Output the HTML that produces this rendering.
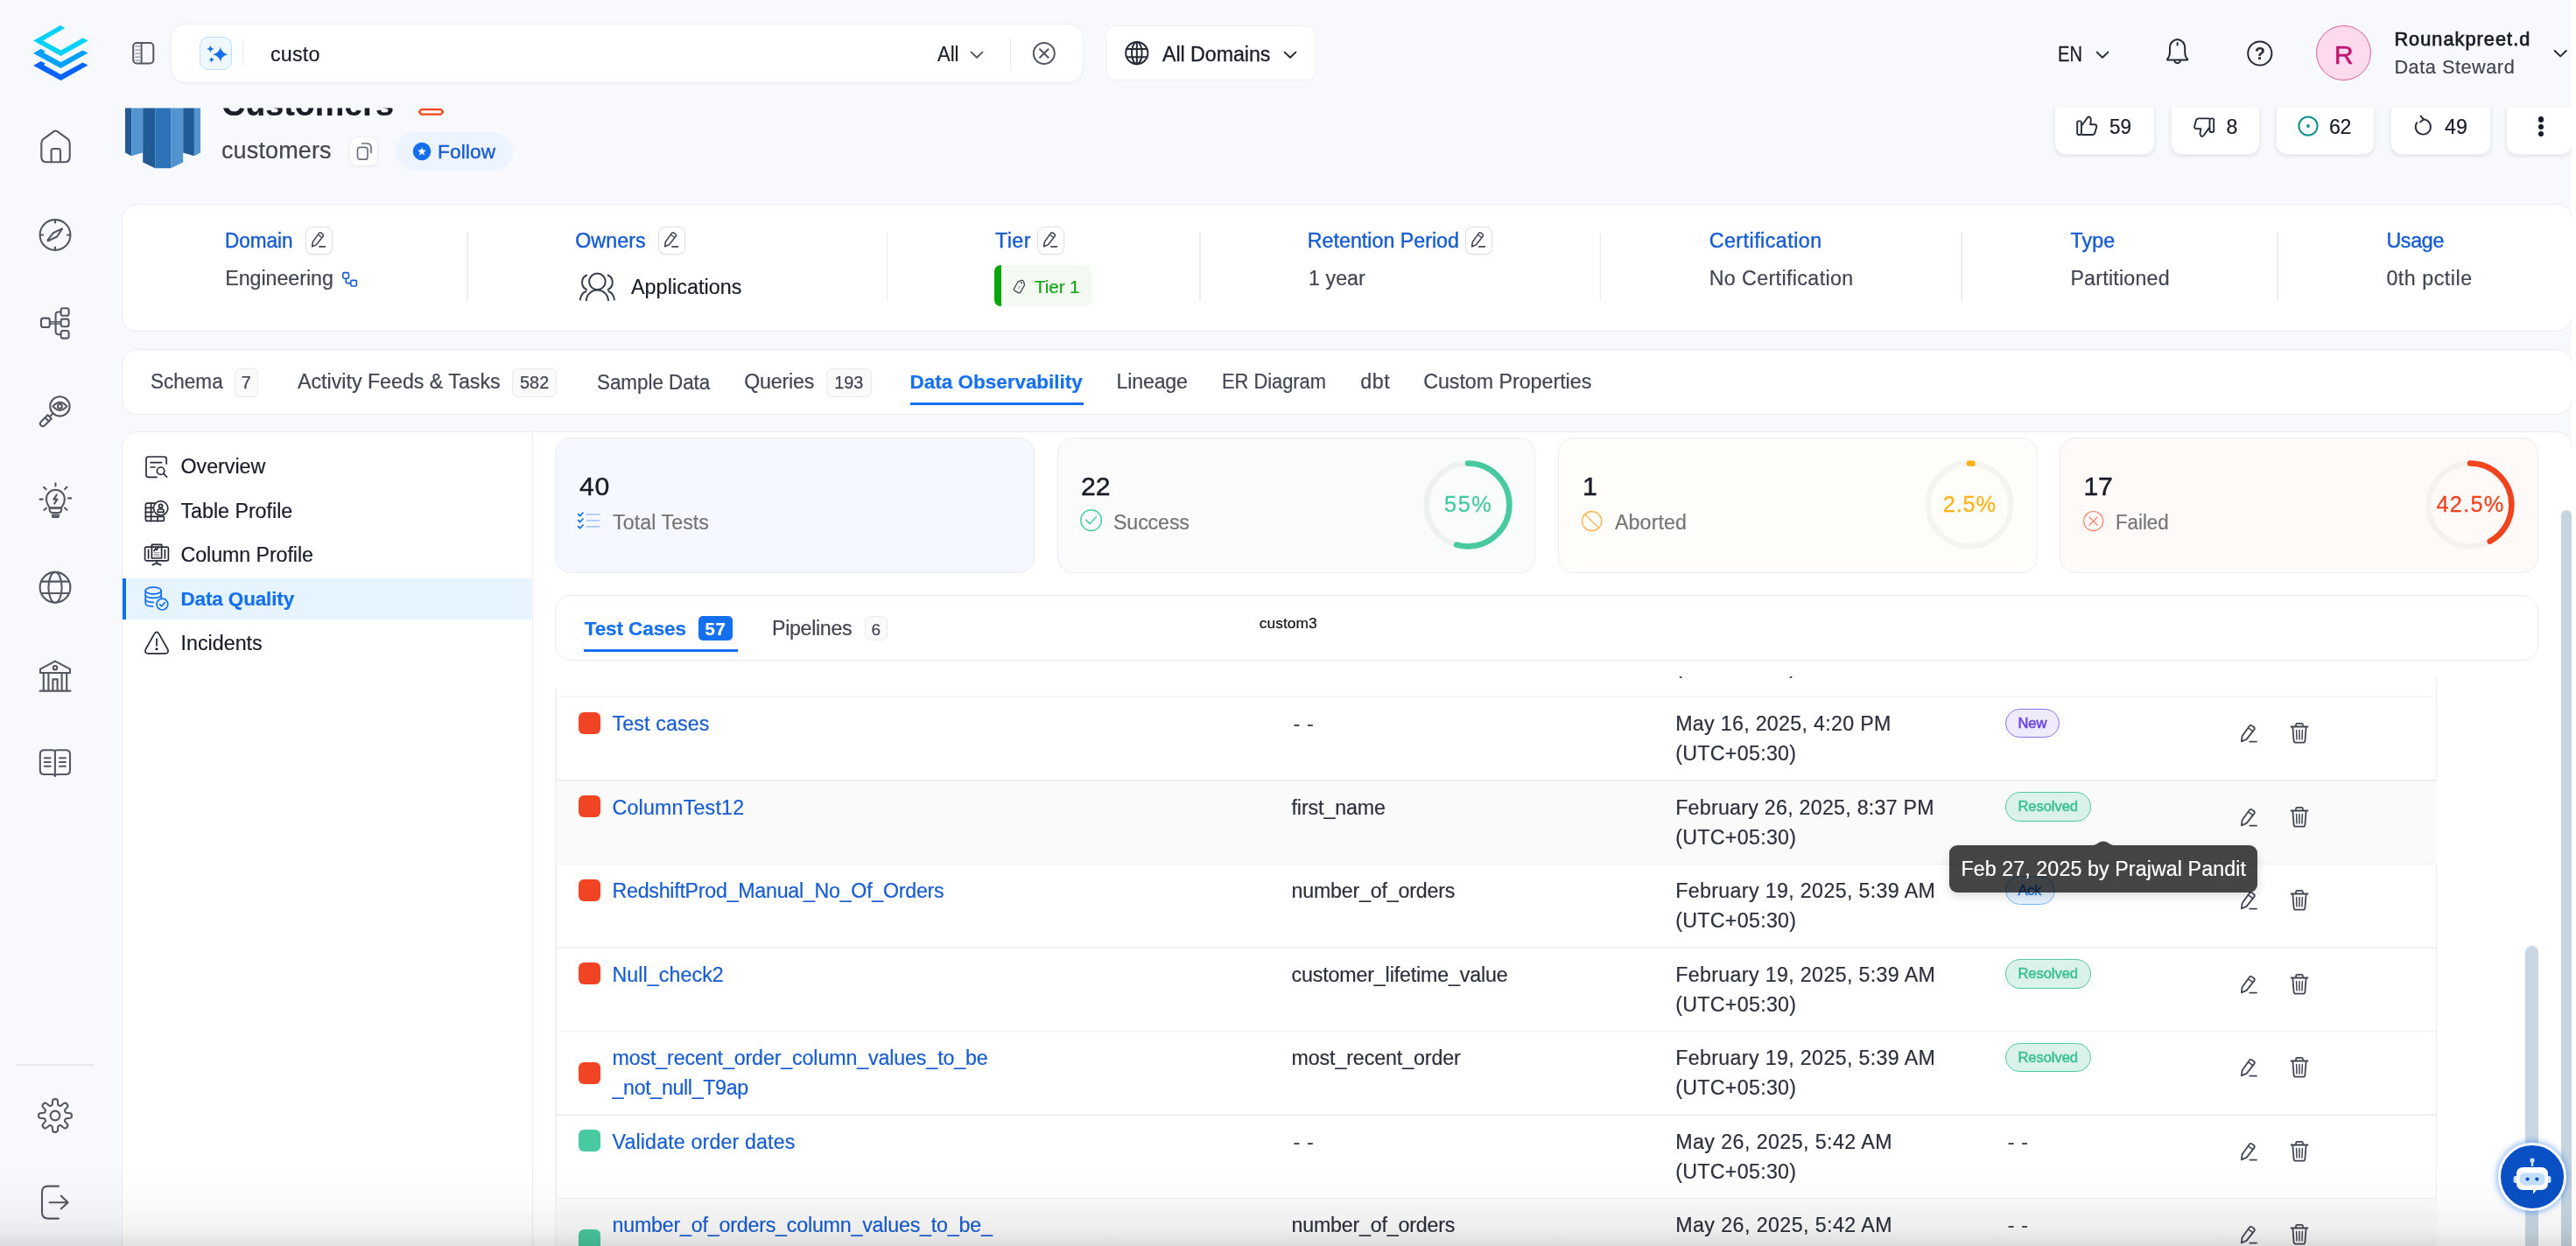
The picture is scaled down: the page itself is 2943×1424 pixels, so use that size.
<!DOCTYPE html>
<html lang="en">
<head>
<meta charset="utf-8">
<title>customers - Data Quality</title>
<style>

*{box-sizing:border-box;margin:0;padding:0}
html,body{width:2943px;height:1424px;overflow:hidden;background:#f8f9fc}
body{font-family:"Liberation Sans",sans-serif;color:#181d27}
#app{position:relative;width:2943px;height:1424px;overflow:hidden;background:#f8f9fc;will-change:transform}
#app div,#app span,#app svg,#app section,#app nav,#app header,#app aside,#app a,#app button{position:absolute}
.t{white-space:nowrap;line-height:1;display:block;-webkit-text-stroke:.2px currentColor}
.card{background:#fff;border:1.5px solid #eaecf5;border-radius:18px}
.ebtn{background:#fff;border:1.5px solid #dcdfe5;border-radius:8px;box-shadow:0 1px 2px rgba(16,24,40,.05)}
.badge{background:#fafafa;border:1.5px solid #e9eaeb;border-radius:6px}
.vdiv{width:1.5px;background:#eaecf5}
.pill{border-radius:20px;border:1.8px solid}
.sq{width:25px;height:25px;border-radius:6px}
.hl{height:1.5px;background:#f0f0f1}
button{font:inherit;border:none;background:none}

</style>
</head>
<body>
<div id="app">
<aside style="left:0;top:0;width:140px;height:1424px"><svg style="left:0.0px;top:0.0px;" width="140" height="110" viewBox="0 0 140 110" fill="none">
<polygon points="69.1,29.1 74.2,32 49.3,46.4 69.5,57.6 94.8,43.2 100.6,46.4 69.5,64.1 38.1,46.4" fill="#00d2fa"/>
<polygon points="46.7,55.8 51.6,58.5 50,60.2 69.5,71 94.4,57.6 100.6,60.5 69.5,77.9 38.1,60.9" fill="#00a0fb"/>
<polygon points="46.7,69.9 51.6,72.6 50,74.2 69.5,85.1 94.4,71.4 100.6,74.6 69.5,92 38.1,75" fill="#0564ff"/>
</svg>
<svg style="left:40.0px;top:145.0px;" width="48" height="48" viewBox="0 0 48 48" fill="none">
<path d="M7.3 18.5 Q7.3 15.5 9.6 13.8 L21.6 5.2 Q23.5 3.9 25.4 5.2 L37.4 13.8 Q39.7 15.5 39.7 18.5 L39.7 34.2 Q39.7 40.2 33.7 40.2 L13.3 40.2 Q7.3 40.2 7.3 34.2 Z" stroke="#535862" stroke-width="2.1" stroke-linecap="round" stroke-linejoin="round" fill="none"/>
<path d="M18.6 40 L18.6 27.4 Q18.6 25 21 25 L26.6 25 Q29 25 29 27.4 L29 40" stroke="#535862" stroke-width="2.1" stroke-linecap="round" stroke-linejoin="round" fill="none"/>
</svg>
<svg style="left:40.0px;top:245.0px;" width="48" height="48" viewBox="0 0 48 48" fill="none">
<circle cx="23" cy="23.5" r="17.4" stroke="#535862" stroke-width="2.1" stroke-linecap="round" stroke-linejoin="round" fill="none"/>
<path d="M23 6.5v3M23 37.5v3M6 23.5h3M37 23.5h3" stroke="#535862" stroke-width="2.1" stroke-linecap="round" stroke-linejoin="round" fill="none"/>
<path d="M30.6 17.2 Q31.6 16.2 30.2 16.6 L20.8 21.3 L14.6 29.2 Q14.2 30.6 15.6 30 L25 25.5 Z" stroke="#535862" stroke-width="2.1" stroke-linecap="round" stroke-linejoin="round" fill="none"/>
</svg>
<svg style="left:40.0px;top:345.0px;" width="48" height="48" viewBox="0 0 48 48" fill="none">
<rect x="7" y="18.6" width="9.8" height="10.4" rx="2.6" stroke="#535862" stroke-width="2.1" stroke-linecap="round" stroke-linejoin="round" fill="none"/>
<rect x="29.6" y="7.2" width="9" height="8.6" rx="2.4" stroke="#535862" stroke-width="2.1" stroke-linecap="round" stroke-linejoin="round" fill="none"/>
<rect x="29.6" y="19.6" width="9" height="8.6" rx="2.4" stroke="#535862" stroke-width="2.1" stroke-linecap="round" stroke-linejoin="round" fill="none"/>
<rect x="29.6" y="33" width="9" height="8.6" rx="2.4" stroke="#535862" stroke-width="2.1" stroke-linecap="round" stroke-linejoin="round" fill="none"/>
<path d="M17 22.8H29.4M17 24.9H29.4" stroke="#535862" stroke-width="1.5"/>
<path d="M29.4 11.5H26.6Q23.6 11.5 23.6 14.5V33.3Q23.6 37.3 26.6 37.3H29.4" stroke="#535862" stroke-width="2.1" stroke-linecap="round" stroke-linejoin="round" fill="none"/>
</svg>
<svg style="left:40.0px;top:447.0px;" width="48" height="48" viewBox="0 0 48 48" fill="none">
<circle cx="28.4" cy="17.4" r="11.2" stroke="#535862" stroke-width="2.1" stroke-linecap="round" stroke-linejoin="round" fill="none"/>
<path d="M20.4 17.4Q28.4 8.4 36.4 17.4Q28.4 26.4 20.4 17.4Z" stroke="#535862" stroke-width="2.1" stroke-linecap="round" stroke-linejoin="round" fill="none" stroke-width="1.8"/>
<circle cx="28.4" cy="17.4" r="2.4" stroke="#535862" stroke-width="2.1" stroke-linecap="round" stroke-linejoin="round" fill="none" stroke-width="1.8"/>
<path d="M20.4 25.6L17.6 28.4" stroke="#535862" stroke-width="2.1" stroke-linecap="round" stroke-linejoin="round" fill="none"/>
<path d="M14.6 27.2L18.8 31.4L11 39.2Q8.9 41.3 6.8 39.2Q4.7 37.1 6.8 35Z" stroke="#535862" stroke-width="2.1" stroke-linecap="round" stroke-linejoin="round" fill="none"/>
<path d="M11.6 30.2L15.8 34.4" stroke="#535862" stroke-width="2.1" stroke-linecap="round" stroke-linejoin="round" fill="none"/>
</svg>
<svg style="left:40.0px;top:547.0px;" width="48" height="48" viewBox="0 0 48 48" fill="none">
<path d="M17.4 33.4Q13 29.2 13 23.2A10.4 10.4 0 0 1 33.8 23.2Q33.8 29.2 29.4 33.4Z" stroke="#535862" stroke-width="2.1" stroke-linecap="round" stroke-linejoin="round" fill="none"/>
<path d="M16.6 33.6H30.2V35.2Q30.2 39 26.4 39H20.4Q16.6 39 16.6 35.2Z" stroke="#535862" stroke-width="2.1" stroke-linecap="round" stroke-linejoin="round" fill="none"/>
<path d="M20 41.6H27V42.4Q27 44 25.4 44H21.6Q20 44 20 42.4Z" stroke="#535862" stroke-width="2.1" stroke-linecap="round" stroke-linejoin="round" fill="none" stroke-width="1.6"/>
<path d="M24.8 18.4L21.4 23.6H25.4L22.2 28.6" stroke="#535862" stroke-width="2.1" stroke-linecap="round" stroke-linejoin="round" fill="none" stroke-width="1.8"/>
<path d="M23.4 5.2V8.4M10 9.8L12.6 12.2M36.6 9.6L34 12M5.6 23.6H8.8M38 22.4H41.2M10.4 36L13 33.6M36.6 35.8L34 33.4" stroke="#535862" stroke-width="2.1" stroke-linecap="round" stroke-linejoin="round" fill="none"/>
</svg>
<svg style="left:40.0px;top:648.0px;" width="48" height="48" viewBox="0 0 48 48" fill="none">
<circle cx="23" cy="23.3" r="17.4" stroke="#535862" stroke-width="2.1" stroke-linecap="round" stroke-linejoin="round" fill="none"/>
<ellipse cx="23" cy="23.3" rx="7.6" ry="17.4" stroke="#535862" stroke-width="2.1" stroke-linecap="round" stroke-linejoin="round" fill="none"/>
<path d="M7.4 16.6H38.6M7.4 30H38.6" stroke="#535862" stroke-width="2.1" stroke-linecap="round" stroke-linejoin="round" fill="none"/>
</svg>
<svg style="left:40.0px;top:750.0px;" width="48" height="48" viewBox="0 0 48 48" fill="none">
<path d="M6 14.6L23 5.6L40 14.6V19H6Z" stroke="#535862" stroke-width="2.1" stroke-linecap="round" stroke-linejoin="round" fill="none"/>
<circle cx="23" cy="13.2" r="2.2" stroke="#535862" stroke-width="2.1" stroke-linecap="round" stroke-linejoin="round" fill="none" stroke-width="1.8"/>
<path d="M9.8 19.4V38.6M15.4 19.4V38.6M30.6 19.4V38.6M36.2 19.4V38.6" stroke="#535862" stroke-width="2.1" stroke-linecap="round" stroke-linejoin="round" fill="none"/>
<path d="M20.4 38.6V26.4H25.6V38.6" stroke="#535862" stroke-width="2.1" stroke-linecap="round" stroke-linejoin="round" fill="none"/>
<path d="M5.6 39.6H40.4" stroke="#535862" stroke-width="2.1" stroke-linecap="round" stroke-linejoin="round" fill="none" stroke-width="2.4"/>
</svg>
<svg style="left:40.0px;top:850.0px;" width="48" height="48" viewBox="0 0 48 48" fill="none">
<path d="M22.8 8.6Q22.8 7.2 19.6 7.2H10.6Q5.8 7.2 5.8 12V30.2Q5.8 35 10.6 35H19.6Q22.8 35 22.8 36.4" stroke="#535862" stroke-width="2.1" stroke-linecap="round" stroke-linejoin="round" fill="none"/>
<path d="M22.8 8.6Q22.8 7.2 26 7.2H35.2Q40 7.2 40 12V30.2Q40 35 35.2 35H26Q22.8 35 22.8 36.4" stroke="#535862" stroke-width="2.1" stroke-linecap="round" stroke-linejoin="round" fill="none"/>
<path d="M22.9 8.6V37" stroke="#535862" stroke-width="2.1" stroke-linecap="round" stroke-linejoin="round" fill="none" stroke-width="2.4"/>
<path d="M10.8 16.2H17.6M10.8 21H17.6M10.8 25.8H17.6M28 16.2H34.8M28 21H34.8M28 25.8H34.8" stroke="#535862" stroke-width="2.1" stroke-linecap="round" stroke-linejoin="round" fill="none" stroke-width="1.8"/>
</svg>
<div style="left:19.0px;top:1216.0px;width:88.0px;height:1.5px;background:#e6e8ee"></div>
<svg style="left:39.0px;top:1250.6px;" width="48" height="48" viewBox="0 0 48 48" fill="none">
<path d="M24.00 5.10L24.74 5.13L25.47 5.26L26.18 5.62L26.75 6.62L27.04 8.70L27.17 10.78L27.45 11.78L27.83 12.20L28.26 12.44L28.71 12.64L29.16 12.81L29.63 12.95L30.20 12.93L31.11 12.40L32.67 11.03L34.35 9.76L35.46 9.47L36.21 9.71L36.82 10.14L37.36 10.64L37.86 11.18L38.29 11.79L38.53 12.54L38.24 13.65L36.97 15.33L35.60 16.89L35.07 17.80L35.05 18.37L35.19 18.84L35.36 19.29L35.56 19.74L35.80 20.17L36.22 20.55L37.22 20.83L39.30 20.96L41.38 21.25L42.38 21.82L42.74 22.53L42.87 23.26L42.90 24.00L42.87 24.74L42.74 25.47L42.38 26.18L41.38 26.75L39.30 27.04L37.22 27.17L36.22 27.45L35.80 27.83L35.56 28.26L35.36 28.71L35.19 29.16L35.05 29.63L35.07 30.20L35.60 31.11L36.97 32.67L38.24 34.35L38.53 35.46L38.29 36.21L37.86 36.82L37.36 37.36L36.82 37.86L36.21 38.29L35.46 38.53L34.35 38.24L32.67 36.97L31.11 35.60L30.20 35.07L29.63 35.05L29.16 35.19L28.71 35.36L28.26 35.56L27.83 35.80L27.45 36.22L27.17 37.22L27.04 39.30L26.75 41.38L26.18 42.38L25.47 42.74L24.74 42.87L24.00 42.90L23.26 42.87L22.53 42.74L21.82 42.38L21.25 41.38L20.96 39.30L20.83 37.22L20.55 36.22L20.17 35.80L19.74 35.56L19.29 35.36L18.84 35.19L18.37 35.05L17.80 35.07L16.89 35.60L15.33 36.97L13.65 38.24L12.54 38.53L11.79 38.29L11.18 37.86L10.64 37.36L10.14 36.82L9.71 36.21L9.47 35.46L9.76 34.35L11.03 32.67L12.40 31.11L12.93 30.20L12.95 29.63L12.81 29.16L12.64 28.71L12.44 28.26L12.20 27.83L11.78 27.45L10.78 27.17L8.70 27.04L6.62 26.75L5.62 26.18L5.26 25.47L5.13 24.74L5.10 24.00L5.13 23.26L5.26 22.53L5.62 21.82L6.62 21.25L8.70 20.96L10.78 20.83L11.78 20.55L12.20 20.17L12.44 19.74L12.64 19.29L12.81 18.84L12.95 18.37L12.93 17.80L12.40 16.89L11.03 15.33L9.76 13.65L9.47 12.54L9.71 11.79L10.14 11.18L10.64 10.64L11.18 10.14L11.79 9.71L12.54 9.47L13.65 9.76L15.33 11.03L16.89 12.40L17.80 12.93L18.37 12.95L18.84 12.81L19.29 12.64L19.74 12.44L20.17 12.20L20.55 11.78L20.83 10.78L20.96 8.70L21.25 6.62L21.82 5.62L22.53 5.26L23.26 5.13L24.00 5.10Z" stroke="#535862" stroke-width="2.1" stroke-linecap="round" stroke-linejoin="round" fill="none"/>
<circle cx="24" cy="24" r="5.4" stroke="#535862" stroke-width="2.1" stroke-linecap="round" stroke-linejoin="round" fill="none"/>
</svg>
<svg style="left:40.0px;top:1350.0px;" width="48" height="48" viewBox="0 0 48 48" fill="none">
<path d="M27 5.6H15Q8 5.6 8 12.6V35.6Q8 42.6 15 42.6H27" stroke="#535862" stroke-width="2.1" stroke-linecap="round" stroke-linejoin="round" fill="none"/>
<path d="M16.6 24.2H37.4M29.8 16.8L37.6 24.2L29.8 31.6" stroke="#535862" stroke-width="2.1" stroke-linecap="round" stroke-linejoin="round" fill="none"/>
</svg></aside>
<header style="left:0;top:0;width:2943px;height:123px"><svg style="left:148.0px;top:44.0px;" width="32" height="32" viewBox="0 0 32 32" fill="none">
<rect x="4.2" y="5" width="23.1" height="23.4" rx="4" stroke="#535862" stroke-width="2" stroke-linecap="round" stroke-linejoin="round" fill="none" stroke-width="2.2"/>
<path d="M13.6 5V28.4" stroke="#535862" stroke-width="2" stroke-linecap="round" stroke-linejoin="round" fill="none" stroke-width="2.2"/>
<path d="M6.4 8.9H12M6.4 13.1H12M6.4 17.2H12M6.4 21.2H12M6.4 25.2H12" stroke="#8a8f9a" stroke-width="1.3"/>
</svg>
<div style="left:195.0px;top:27.0px;width:1043.4px;height:67.5px;background:#fff;border:1.5px solid #eef0f6;border-radius:18px;box-shadow:0 1px 3px rgba(16,24,40,.04)"></div>
<div style="left:228.0px;top:42.0px;width:37.0px;height:38.0px;background:#eff8ff;border:1.5px solid #b9e1fd;border-radius:10px"></div>
<svg style="left:228.0px;top:42.0px;" width="37" height="38" viewBox="0 0 37 38" fill="none">
<path d="M23.8 11.6Q24.9 18.6 32.4 20.2Q24.9 21.8 23.8 28.8Q22.7 21.8 15.2 20.2Q22.7 18.6 23.8 11.6Z" fill="#1570ef"/>
<path d="M12.4 9.6Q12.9 13.4 16.6 13.9Q12.9 14.4 12.4 18.2Q11.9 14.4 8.2 13.9Q11.9 13.4 12.4 9.6Z" fill="#1570ef"/>
<path d="M13.7 23.2Q14.1 25.9 16.9 26.3Q14.1 26.7 13.7 29.4Q13.3 26.7 10.5 26.3Q13.3 25.9 13.7 23.2Z" fill="#1570ef"/>
</svg>
<div style="left:277.0px;top:44.0px;width:1.2px;height:32.0px;background:#e6e8ef"></div>
<span class="t" style="left:309.0px;top:51px;font-size:23.21px;letter-spacing:0.206px;color:#181d27;">custo</span>
<span class="t" style="left:1071.0px;top:51px;font-size:23.21px;color:#181d27;transform:scaleX(0.9498);transform-origin:0 50%;">All</span>
<svg style="left:1103.6px;top:50.8px;" width="24" height="24" viewBox="0 0 24 24" fill="none"><path d="M5.6 8.6L12 14.8L18.4 8.6" stroke="#535862" stroke-width="2" stroke-linecap="round" stroke-linejoin="round" fill="none"/></svg>
<div style="left:1154.0px;top:44.0px;width:1.2px;height:32.0px;background:#e6e8ef"></div>
<svg style="left:1176.0px;top:44.0px;" width="34" height="34" viewBox="0 0 34 34" fill="none">
<circle cx="16.8" cy="17" r="12" stroke="#535862" stroke-width="2" stroke-linecap="round" stroke-linejoin="round" fill="none"/>
<path d="M12 12.2L21.6 21.8M21.6 12.2L12 21.8" stroke="#535862" stroke-width="2" stroke-linecap="round" stroke-linejoin="round" fill="none"/>
</svg>
<div style="left:1262.8px;top:29.2px;width:241.2px;height:63.0px;background:#fff;border:1.5px solid #eef0f6;border-radius:12px"></div>
<svg style="left:1282.0px;top:44.0px;" width="34" height="34" viewBox="0 0 34 34" fill="none">
<circle cx="16.8" cy="16.6" r="12.6" stroke="#252b37" stroke-width="2" stroke-linecap="round" stroke-linejoin="round" fill="none" stroke-width="1.8"/>
<ellipse cx="16.8" cy="16.6" rx="5.8" ry="12.6" stroke="#252b37" stroke-width="2" stroke-linecap="round" stroke-linejoin="round" fill="none" stroke-width="1.7"/>
<path d="M16.8 4V29.2M5.2 12H28.4M5.2 21.2H28.4" stroke="#252b37" stroke-width="2" stroke-linecap="round" stroke-linejoin="round" fill="none" stroke-width="1.6"/>
</svg>
<span class="t" style="left:1328.0px;top:51px;font-size:23.21px;letter-spacing:-0.033px;color:#181d27;-webkit-text-stroke:0.3px #181d27;">All Domains</span>
<svg style="left:1462.0px;top:50.8px;" width="24" height="24" viewBox="0 0 24 24" fill="none"><path d="M5.6 8.6L12 14.8L18.4 8.6" stroke="#252b37" stroke-width="2" stroke-linecap="round" stroke-linejoin="round" fill="none"/></svg>
<span class="t" style="left:2350.6px;top:51px;font-size:23.21px;color:#181d27;-webkit-text-stroke:0.3px #181d27;transform:scaleX(0.8653);transform-origin:0 50%;">EN</span>
<svg style="left:2389.5px;top:50.8px;" width="24" height="24" viewBox="0 0 24 24" fill="none"><path d="M5.6 8.6L12 14.8L18.4 8.6" stroke="#252b37" stroke-width="2" stroke-linecap="round" stroke-linejoin="round" fill="none"/></svg>
<svg style="left:2470.0px;top:42.0px;" width="36" height="36" viewBox="0 0 36 36" fill="none">
<path d="M6.2 25.4Q9 22.6 9 17.2V13Q9 4.6 17.6 3Q26.2 4.6 26.2 13V17.2Q26.2 22.6 29 25.4Q29.6 26.6 28.4 26.6H6.8Q5.6 26.6 6.2 25.4Z" stroke="#252b37" stroke-width="2" stroke-linecap="round" stroke-linejoin="round" fill="none"/>
<path d="M14.2 27Q14.6 30.2 17.6 30.2Q20.6 30.2 21 27" stroke="#252b37" stroke-width="2" stroke-linecap="round" stroke-linejoin="round" fill="none"/>
<path d="M17.6 7V9.6" stroke="#252b37" stroke-width="2" stroke-linecap="round" stroke-linejoin="round" fill="none"/>
</svg>
<svg style="left:2564.0px;top:43.0px;" width="36" height="36" viewBox="0 0 36 36" fill="none">
<circle cx="17.8" cy="18" r="13.6" stroke="#252b37" stroke-width="2" stroke-linecap="round" stroke-linejoin="round" fill="none" stroke-width="2.2"/>
</svg>
<span class="t" style="left:2576.1px;top:52px;font-size:19.38px;font-weight:700;color:#252b37;">?</span>
<div style="left:2646.1px;top:29.1px;width:62.9px;height:62.9px;background:#fddaed;border:1.6px solid #dc5c97;border-radius:50%"></div>
<span class="t" style="left:2666.8px;top:47px;font-size:30.40px;color:#c11574;-webkit-text-stroke:0.5px #c11574;">R</span>
<span class="t" style="left:2735.4px;top:34px;font-size:21.73px;letter-spacing:1.036px;color:#181d27;-webkit-text-stroke:0.75px #181d27;">Rounakpreet.d</span>
<span class="t" style="left:2735.4px;top:66px;font-size:21.73px;letter-spacing:0.521px;color:#414651;">Data Steward</span>
<svg style="left:2913.0px;top:49.0px;" width="24" height="24" viewBox="0 0 24 24" fill="none"><path d="M5.6 9L12.2 15.4L18.8 9" stroke="#252b37" stroke-width="2" stroke-linecap="round" stroke-linejoin="round" fill="none"/></svg></header>
<main style="left:0;top:0;width:2943px;height:1424px;clip-path:inset(123.5px 0 0 0)">
<svg style="left:142.8px;top:100.0px;" width="86" height="93" viewBox="0 0 86 93" fill="none">
<polygon points="0,0 7.2,0 7.2,78.2 0,74.4" fill="#205b98"/>
<polygon points="7.2,0 20.2,0 20.2,74.6 7.2,78.2" fill="#5294cf"/>
<polygon points="20.2,0 34.2,0 34.2,92.2 20.2,85.4" fill="#205b98"/>
<polygon points="34.2,0 52.2,0 52.2,92.2 34.2,92.2" fill="#2e73b8"/>
<polygon points="52.2,0 66.2,0 66.2,85.4 52.2,92.2" fill="#5294cf"/>
<polygon points="66.2,0 78.9,0 78.9,78.2 66.2,74.6" fill="#205b98"/>
<polygon points="78.9,0 86,0 86,74.4 78.9,78.2" fill="#5294cf"/>
</svg>
<span class="t" style="left:253.0px;top:100px;font-size:38.45px;font-weight:700;color:#181d27;transform:scaleX(0.9807);transform-origin:0 50%;">Customers</span>
<svg style="left:470.0px;top:118.0px;" width="44" height="20" viewBox="0 0 44 20" fill="none"><polygon points="9,9.9 11.1,7.2 34,7.2 36.1,9.9 34,12.6 11.1,12.6" stroke="#f04419" stroke-width="2.3" stroke-linejoin="round" fill="none"/></svg>
<span class="t" style="left:253.0px;top:159px;font-size:27.00px;letter-spacing:0.121px;color:#414651;">customers</span>
<div class="ebtn" style="left:398.5px;top:156.3px;width:33.8px;height:34.1px;border-color:#eceef3;border-radius:9px"></div>
<svg style="left:403.0px;top:161.0px;" width="25" height="25" viewBox="0 0 25 25" fill="none">
<rect x="5.5" y="7.4" width="11.5" height="13.8" rx="2.8" stroke="#6b717e" stroke-width="1.7" fill="#fff"/>
<path d="M10.6 3H16Q21 3 21 8V13.4" stroke="#6b717e" stroke-width="1.7" stroke-linecap="round" fill="none"/>
</svg>
<div style="left:451.5px;top:151.0px;width:134.0px;height:44.0px;background:#eef4fe;border-radius:22px"></div>
<svg style="left:470.0px;top:161.0px;" width="24" height="24" viewBox="0 0 24 24" fill="none">
<circle cx="12" cy="12" r="10.3" fill="#1570ef"/>
<path d="M12 7.2L13.3 10.5L16.8 10.7L14.1 12.9L15 16.4L12 14.5L9 16.4L9.9 12.9L7.2 10.7L10.7 10.5Z" fill="#fff"/>
</svg>
<span class="t" style="left:500.0px;top:163px;font-size:22.58px;letter-spacing:0.152px;color:#175cd3;-webkit-text-stroke:0.4px #175cd3;">Follow</span>
<div style="left:2346.9px;top:100.0px;width:115.3px;height:76.6px;background:#fff;border:1.5px solid #eef0f5;border-radius:13px;box-shadow:0 2px 4px rgba(16,24,40,.09)"></div>
<div style="left:2480.4px;top:100.0px;width:101.2px;height:76.6px;background:#fff;border:1.5px solid #eef0f5;border-radius:13px;box-shadow:0 2px 4px rgba(16,24,40,.09)"></div>
<div style="left:2600.0px;top:100.0px;width:113.0px;height:76.6px;background:#fff;border:1.5px solid #eef0f5;border-radius:13px;box-shadow:0 2px 4px rgba(16,24,40,.09)"></div>
<div style="left:2731.2px;top:100.0px;width:115.0px;height:76.6px;background:#fff;border:1.5px solid #eef0f5;border-radius:13px;box-shadow:0 2px 4px rgba(16,24,40,.09)"></div>
<div style="left:2863.2px;top:100.0px;width:75.4px;height:76.6px;background:#fff;border:1.5px solid #eef0f5;border-radius:13px;box-shadow:0 2px 4px rgba(16,24,40,.09)"></div>
<svg style="left:2370.0px;top:130.0px;" width="30" height="30" viewBox="0 0 30 30" fill="none"><rect x="3.2" y="8.4" width="4.7" height="15.6" rx="1.7" stroke="#252b37" stroke-width="1.9" stroke-linecap="round" stroke-linejoin="round" fill="none"/>
<path d="M8.9 12.8L14.9 4.4Q16.4 2.6 18 4.4Q19.5 6.2 18.6 9.2L18.1 12.3H22.8Q25.8 12.5 25.2 15.2L23.4 21.8Q22.8 24 20.4 24H8.9" stroke="#252b37" stroke-width="1.9" stroke-linecap="round" stroke-linejoin="round" fill="none"/></svg>
<span class="t" style="left:2410.0px;top:134px;font-size:23.21px;color:#181d27;transform:scaleX(0.9684);transform-origin:0 50%;">59</span>
<svg style="left:2503.0px;top:130.0px;" width="30" height="30" viewBox="0 0 30 30" fill="none"><g transform="rotate(180 14.7 14.7)"><rect x="3.2" y="8.4" width="4.7" height="15.6" rx="1.7" stroke="#252b37" stroke-width="1.9" stroke-linecap="round" stroke-linejoin="round" fill="none"/>
<path d="M8.9 12.8L14.9 4.4Q16.4 2.6 18 4.4Q19.5 6.2 18.6 9.2L18.1 12.3H22.8Q25.8 12.5 25.2 15.2L23.4 21.8Q22.8 24 20.4 24H8.9" stroke="#252b37" stroke-width="1.9" stroke-linecap="round" stroke-linejoin="round" fill="none"/></g></svg>
<span class="t" style="left:2543.5px;top:134px;font-size:23.21px;color:#181d27;">8</span>
<svg style="left:2622.0px;top:129.0px;" width="30" height="30" viewBox="0 0 30 30" fill="none">
<circle cx="15" cy="15" r="10.6" stroke="#0e9384" stroke-width="2" fill="none"/><circle cx="15" cy="15" r="1.9" fill="#0e9384"/>
</svg>
<span class="t" style="left:2661.0px;top:134px;font-size:23.21px;letter-spacing:-0.417px;color:#181d27;">62</span>
<svg style="left:2753.0px;top:129.0px;" width="30" height="30" viewBox="0 0 30 30" fill="none">
<path d="M15.6 7.4A8.6 8.6 0 1 1 8.2 11.2" stroke="#252b37" stroke-width="1.9" stroke-linecap="round" stroke-linejoin="round" fill="none"/>
<path d="M12.6 3.6L16 7.4L12 10.4" stroke="#252b37" stroke-width="1.9" stroke-linecap="round" stroke-linejoin="round" fill="none"/>
</svg>
<span class="t" style="left:2793.0px;top:134px;font-size:23.21px;letter-spacing:-0.017px;color:#181d27;">49</span>
<div style="left:2900.1px;top:133.4px;width:6.4px;height:6.4px;background:#181d27;border-radius:50%"></div>
<div style="left:2900.1px;top:141.5px;width:6.4px;height:6.4px;background:#181d27;border-radius:50%"></div>
<div style="left:2900.1px;top:149.7px;width:6.4px;height:6.4px;background:#181d27;border-radius:50%"></div>
<div class="card" style="left:139.0px;top:233.3px;width:2800.0px;height:146.2px;"></div>
<span class="t" style="left:257.2px;top:264px;font-size:23.21px;color:#175cd3;-webkit-text-stroke:0.42px #175cd3;transform:scaleX(0.9703);transform-origin:0 50%;">Domain</span>
<div class="ebtn" style="left:348.6px;top:259.3px;width:31.0px;height:31.4px;"></div><svg style="left:348.6px;top:259.3px;" width="31" height="31" viewBox="0 0 31 31" fill="none"><path d="M7.6 22.7L8.3 17.5L15.4 7.6Q16.5 6.2 17.9 7.2L19.8 8.6Q21.1 9.7 20.1 11.1L12.6 20.6Z" stroke="#414651" stroke-width="1.55" stroke-linejoin="round" fill="none"/><path d="M14.3 9.3L18.8 12.6" stroke="#414651" stroke-width="1.3"/><path d="M15.8 22.9H22.4" stroke="#414651" stroke-width="1.6" stroke-linecap="round"/></svg>
<span class="t" style="left:257.2px;top:307px;font-size:23.21px;letter-spacing:-0.018px;color:#414651;">Engineering</span>
<svg style="left:389.0px;top:309.0px;" width="22" height="22" viewBox="0 0 22 22" fill="none">
<rect x="2.8" y="2.6" width="6.6" height="6.6" rx="1.6" stroke="#175cd3" stroke-width="1.6"/>
<rect x="11.8" y="11.4" width="6.6" height="6.6" rx="1.6" stroke="#175cd3" stroke-width="1.6"/>
<path d="M6.2 9.4V12.4Q6.2 14.6 8.4 14.6H11.6" stroke="#175cd3" stroke-width="1.6" fill="none"/>
</svg>
<div class="vdiv" style="left:533.0px;top:266.0px;width:1.5px;height:77.5px;"></div>
<div class="vdiv" style="left:1012.9px;top:266.0px;width:1.5px;height:77.5px;"></div>
<div class="vdiv" style="left:1370.0px;top:266.0px;width:1.5px;height:77.5px;"></div>
<div class="vdiv" style="left:1827.7px;top:266.0px;width:1.5px;height:77.5px;"></div>
<div class="vdiv" style="left:2240.3px;top:266.0px;width:1.5px;height:77.5px;"></div>
<div class="vdiv" style="left:2601.4px;top:266.0px;width:1.5px;height:77.5px;"></div>
<span class="t" style="left:657.2px;top:264px;font-size:23.21px;letter-spacing:0.087px;color:#175cd3;-webkit-text-stroke:0.42px #175cd3;">Owners</span>
<div class="ebtn" style="left:752.0px;top:259.3px;width:31.0px;height:31.4px;"></div><svg style="left:752.0px;top:259.3px;" width="31" height="31" viewBox="0 0 31 31" fill="none"><path d="M7.6 22.7L8.3 17.5L15.4 7.6Q16.5 6.2 17.9 7.2L19.8 8.6Q21.1 9.7 20.1 11.1L12.6 20.6Z" stroke="#414651" stroke-width="1.55" stroke-linejoin="round" fill="none"/><path d="M14.3 9.3L18.8 12.6" stroke="#414651" stroke-width="1.3"/><path d="M15.8 22.9H22.4" stroke="#414651" stroke-width="1.6" stroke-linecap="round"/></svg>
<svg style="left:660.0px;top:309.0px;" width="46" height="40" viewBox="0 0 46 40" fill="none">
<circle cx="22.4" cy="12.8" r="9.3" stroke="#363c49" stroke-width="2" stroke-linecap="butt" stroke-linejoin="round" fill="none"/>
<path d="M9.8 35A12.6 12.6 0 0 1 35 35" stroke="#363c49" stroke-width="2" stroke-linecap="butt" stroke-linejoin="round" fill="none"/>
<path d="M10.8 5.3A9 9 0 0 0 10.8 22.1M34 5.3A9 9 0 0 1 34 22.1" stroke="#363c49" stroke-width="2" stroke-linecap="butt" stroke-linejoin="round" fill="none"/>
<path d="M10.3 23.3A12.6 12.6 0 0 0 2.8 34.2M34.5 23.3A12.6 12.6 0 0 1 42 34.2" stroke="#363c49" stroke-width="2" stroke-linecap="butt" stroke-linejoin="round" fill="none"/>
</svg>
<span class="t" style="left:721.0px;top:317px;font-size:23.21px;letter-spacing:0.114px;color:#181d27;">Applications</span>
<span class="t" style="left:1137.0px;top:264px;font-size:23.21px;letter-spacing:0.430px;color:#175cd3;-webkit-text-stroke:0.42px #175cd3;">Tier</span>
<div class="ebtn" style="left:1184.8px;top:259.3px;width:31.0px;height:31.4px;"></div><svg style="left:1184.8px;top:259.3px;" width="31" height="31" viewBox="0 0 31 31" fill="none"><path d="M7.6 22.7L8.3 17.5L15.4 7.6Q16.5 6.2 17.9 7.2L19.8 8.6Q21.1 9.7 20.1 11.1L12.6 20.6Z" stroke="#414651" stroke-width="1.55" stroke-linejoin="round" fill="none"/><path d="M14.3 9.3L18.8 12.6" stroke="#414651" stroke-width="1.3"/><path d="M15.8 22.9H22.4" stroke="#414651" stroke-width="1.6" stroke-linecap="round"/></svg>
<div style="left:1135.9px;top:303.2px;width:111.4px;height:47.0px;background:#f2faf2;border-radius:7px;border-left:8px solid #0aa60a"></div>
<svg style="left:1155.4px;top:317.4px;" width="20" height="20" viewBox="0 0 20 20" fill="none">
<g transform="rotate(30 10 10)" stroke="#414651" stroke-width="1.3" stroke-linejoin="round" fill="none"><path d="M5.8 6.4L8.4 3.4Q10 2 11.6 3.4L14.2 6.4V15.6Q14.2 17.4 12.4 17.4H7.6Q5.8 17.4 5.8 15.6Z"/><path d="M10 9.6V13.4" stroke-width="1" stroke="#8a8f99"/></g>
<circle cx="11.9" cy="6.1" r="1.1" fill="#414651"/>
</svg>
<span class="t" style="left:1182.0px;top:318px;font-size:20.68px;letter-spacing:-0.098px;color:#14a314;-webkit-text-stroke:0.2px #14a314;">Tier 1</span>
<span class="t" style="left:1493.8px;top:264px;font-size:23.21px;letter-spacing:0.020px;color:#175cd3;-webkit-text-stroke:0.42px #175cd3;">Retention Period</span>
<div class="ebtn" style="left:1674.3px;top:259.3px;width:31.0px;height:31.4px;"></div><svg style="left:1674.3px;top:259.3px;" width="31" height="31" viewBox="0 0 31 31" fill="none"><path d="M7.6 22.7L8.3 17.5L15.4 7.6Q16.5 6.2 17.9 7.2L19.8 8.6Q21.1 9.7 20.1 11.1L12.6 20.6Z" stroke="#414651" stroke-width="1.55" stroke-linejoin="round" fill="none"/><path d="M14.3 9.3L18.8 12.6" stroke="#414651" stroke-width="1.3"/><path d="M15.8 22.9H22.4" stroke="#414651" stroke-width="1.6" stroke-linecap="round"/></svg>
<span class="t" style="left:1495.0px;top:307px;font-size:23.21px;letter-spacing:0.058px;color:#414651;">1 year</span>
<span class="t" style="left:1952.7px;top:264px;font-size:23.21px;letter-spacing:0.496px;color:#175cd3;-webkit-text-stroke:0.42px #175cd3;">Certification</span>
<span class="t" style="left:1952.7px;top:307px;font-size:23.21px;letter-spacing:0.396px;color:#414651;">No Certification</span>
<span class="t" style="left:2365.4px;top:264px;font-size:23.21px;letter-spacing:0.160px;color:#175cd3;-webkit-text-stroke:0.42px #175cd3;">Type</span>
<span class="t" style="left:2365.4px;top:307px;font-size:23.21px;letter-spacing:0.234px;color:#414651;">Partitioned</span>
<span class="t" style="left:2726.4px;top:264px;font-size:23.21px;letter-spacing:-0.273px;color:#175cd3;-webkit-text-stroke:0.42px #175cd3;">Usage</span>
<span class="t" style="left:2726.4px;top:307px;font-size:23.21px;letter-spacing:0.545px;color:#414651;">0th pctile</span>
<nav style="left:0;top:0;width:2943px;height:0"><div class="card" style="left:139.0px;top:398.9px;width:2800.0px;height:75.4px;"></div>
<span class="t" style="left:172.0px;top:425px;font-size:23.21px;color:#414651;transform:scaleX(0.9713);transform-origin:0 50%;">Schema</span>
<div class="badge" style="left:267.9px;top:421.2px;width:26.7px;height:32.6px;"></div><span class="t" style="left:275.7px;top:428px;font-size:19.83px;color:#414651;-webkit-text-stroke:0.25px #414651;">7</span>
<span class="t" style="left:340.0px;top:425px;font-size:23.21px;color:#414651;">Activity Feeds &amp; Tasks</span>
<div class="badge" style="left:585.4px;top:421.2px;width:50.5px;height:32.6px;"></div><span class="t" style="left:594.1px;top:428px;font-size:19.83px;color:#414651;-webkit-text-stroke:0.25px #414651;">582</span>
<span class="t" style="left:682.0px;top:426px;font-size:23.21px;color:#414651;transform:scaleX(0.9637);transform-origin:0 50%;">Sample Data</span>
<span class="t" style="left:850.2px;top:425px;font-size:23.21px;letter-spacing:-0.162px;color:#414651;">Queries</span>
<div class="badge" style="left:944.0px;top:421.2px;width:51.7px;height:32.6px;"></div><span class="t" style="left:953.3px;top:428px;font-size:19.83px;color:#414651;-webkit-text-stroke:0.25px #414651;">193</span>
<span class="t" style="left:1039.6px;top:426px;font-size:22.44px;letter-spacing:0.009px;font-weight:700;color:#1570ef;">Data Observability</span>
<div style="left:1039.6px;top:460.0px;width:198.0px;height:3.2px;background:#1570ef"></div>
<span class="t" style="left:1275.6px;top:425px;font-size:23.21px;letter-spacing:-0.201px;color:#414651;">Lineage</span>
<span class="t" style="left:1396.0px;top:425px;font-size:23.21px;color:#414651;transform:scaleX(0.9415);transform-origin:0 50%;">ER Diagram</span>
<span class="t" style="left:1554.3px;top:425px;font-size:23.21px;letter-spacing:0.567px;color:#414651;">dbt</span>
<span class="t" style="left:1626.2px;top:425px;font-size:23.21px;letter-spacing:-0.006px;color:#414651;">Custom Properties</span></nav>
<nav style="left:0;top:0;width:2943px;height:0"><div class="card" style="left:139.0px;top:492.8px;width:2800.0px;height:960.0px;border-radius:18px 18px 0 0"></div>
<div style="left:607.6px;top:494.5px;width:1.5px;height:940.0px;background:#eaecf5"></div>
<div style="left:139.8px;top:661.0px;width:467.2px;height:47.0px;background:#e6f4ff;border-left:4.2px solid #1570ef"></div>
<svg style="left:163.0px;top:518.0px;" width="32" height="32" viewBox="0 0 32 32" fill="none">
<path d="M16 27.4H6.6Q4 27.4 4 24.8V6.6Q4 4 6.6 4H24.6Q27.2 4 27.2 6.6V12" stroke="#262b37" stroke-width="1.7" stroke-linecap="round" stroke-linejoin="round" fill="none"/>
<path d="M9 10.6H21.6M9 16H14" stroke="#262b37" stroke-width="1.7" stroke-linecap="round" stroke-linejoin="round" fill="none"/>
<circle cx="20.6" cy="20.2" r="4.2" stroke="#262b37" stroke-width="1.7" stroke-linecap="round" stroke-linejoin="round" fill="none"/>
<path d="M23.8 23.4L27.6 27.2" stroke="#262b37" stroke-width="1.7" stroke-linecap="round" stroke-linejoin="round" fill="none"/>
</svg>
<span class="t" style="left:206.5px;top:522px;font-size:23.21px;color:#181d27;">Overview</span>
<svg style="left:163.0px;top:568.0px;" width="32" height="32" viewBox="0 0 32 32" fill="none">
<path d="M14 7.2H5.4Q3.4 7.2 3.4 9.2V25.4Q3.4 27.4 5.4 27.4H22.4Q24.4 27.4 24.4 25.4V23" stroke="#262b37" stroke-width="1.7" stroke-linecap="round" stroke-linejoin="round" fill="none" stroke-width="1.6"/>
<path d="M3.4 12.4H11.6M3.4 17.4H11.6M3.4 22.4H24M9.6 7.4V27.4M17 22.6V27.4" stroke="#262b37" stroke-width="1.7" stroke-linecap="round" stroke-linejoin="round" fill="none" stroke-width="1.5"/>
<circle cx="20.6" cy="12.8" r="8.2" stroke="#262b37" stroke-width="1.7" stroke-linecap="round" stroke-linejoin="round" fill="none" stroke-width="1.6" fill="#fff"/>
<circle cx="20.6" cy="10.4" r="2" stroke="#262b37" stroke-width="1.7" stroke-linecap="round" stroke-linejoin="round" fill="none" stroke-width="1.4"/>
<path d="M17.2 17.4V15.6Q17.2 14 18.8 14H22.4Q24 14 24 15.6V17.4Z" stroke="#262b37" stroke-width="1.7" stroke-linecap="round" stroke-linejoin="round" fill="none" stroke-width="1.4"/>
</svg>
<span class="t" style="left:206.5px;top:573px;font-size:23.21px;color:#181d27;">Table Profile</span>
<svg style="left:163.0px;top:618.0px;" width="32" height="32" viewBox="0 0 32 32" fill="none">
<rect x="2.6" y="7.2" width="26.8" height="15.6" rx="1.8" stroke="#262b37" stroke-width="1.7" stroke-linecap="round" stroke-linejoin="round" fill="none" stroke-width="1.6"/>
<path d="M6.6 10.4V20M25.4 10.4V20" stroke="#262b37" stroke-width="1.7" stroke-linecap="round" stroke-linejoin="round" fill="none" stroke-width="1.4"/>
<rect x="10.4" y="4.4" width="11.2" height="15.6" stroke="#262b37" stroke-width="1.7" stroke-linecap="round" stroke-linejoin="round" fill="none" stroke-width="1.5" fill="#fff"/>
<path d="M13 11.6L14.6 8.8L16 10.6L18 7.4" stroke="#262b37" stroke-width="1.7" stroke-linecap="round" stroke-linejoin="round" fill="none" stroke-width=".9"/><path d="M12.6 13.6H19.4M12.6 15.6H19.4M12.6 17.6H19.4" stroke="#6b717e" stroke-width=".8"/>
<path d="M16 22.8V26M11.4 27.6L16 25.6L20.6 27.6" stroke="#262b37" stroke-width="1.7" stroke-linecap="round" stroke-linejoin="round" fill="none" stroke-width="1.6"/>
</svg>
<span class="t" style="left:206.5px;top:623px;font-size:23.21px;letter-spacing:-0.055px;color:#181d27;">Column Profile</span>
<svg style="left:163.0px;top:668.0px;" width="32" height="32" viewBox="0 0 32 32" fill="none">
<ellipse cx="12.2" cy="7" rx="9" ry="3.8" stroke="#1570ef" stroke-width="1.7" stroke-linecap="round" stroke-linejoin="round" fill="none"/>
<path d="M3.2 7V21.6Q3.2 25 11.6 25.2M21.2 7V15" stroke="#1570ef" stroke-width="1.7" stroke-linecap="round" stroke-linejoin="round" fill="none"/>
<path d="M3.2 11.8Q3.2 15.4 12.2 15.4Q21.2 15.4 21.2 11.8M3.2 16.8Q3.2 20.4 12.2 20.4" stroke="#1570ef" stroke-width="1.7" stroke-linecap="round" stroke-linejoin="round" fill="none"/>
<circle cx="22.4" cy="22.6" r="6.4" stroke="#1570ef" stroke-width="1.7" stroke-linecap="round" stroke-linejoin="round" fill="none" fill="#e6f4ff"/>
<path d="M19.6 22.8L21.6 24.8L25.4 20.6" stroke="#1570ef" stroke-width="1.7" stroke-linecap="round" stroke-linejoin="round" fill="none"/>
</svg>
<span class="t" style="left:206.5px;top:674px;font-size:22.44px;letter-spacing:-0.112px;font-weight:700;color:#1570ef;">Data Quality</span>
<svg style="left:163.0px;top:718.0px;" width="32" height="32" viewBox="0 0 32 32" fill="none">
<path d="M13.4 6.4Q16 2.4 18.6 6.4L28.6 24Q30.4 28.4 26 28.8H6Q1.6 28.4 3.4 24Z" stroke="#262b37" stroke-width="1.7" stroke-linecap="round" stroke-linejoin="round" fill="none" stroke-width="2.3"/>
<path d="M16 12V19.8" stroke="#262b37" stroke-width="1.7" stroke-linecap="round" stroke-linejoin="round" fill="none" stroke-width="2.4"/>
<circle cx="16" cy="23.8" r="1.5" fill="#181d27"/>
</svg>
<span class="t" style="left:206.5px;top:724px;font-size:23.21px;letter-spacing:0.038px;color:#181d27;">Incidents</span></nav>
<section style="left:0;top:0;width:2943px;height:0"><div style="left:634.3px;top:500.2px;width:548.0px;height:154.5px;border:1.5px solid #eaecf5;border-radius:18px;background:#f5f8fe"></div>
<div style="left:1207.7px;top:500.2px;width:546.6px;height:154.5px;border:1.5px solid #eaecf5;border-radius:18px;background:#f9fcfb"></div>
<div style="left:1780.3px;top:500.2px;width:547.6px;height:154.5px;border:1.5px solid #eaecf5;border-radius:18px;background:#fffdf9"></div>
<div style="left:2353.3px;top:500.2px;width:546.7px;height:154.5px;border:1.5px solid #eaecf5;border-radius:18px;background:#fffaf8"></div>
<span class="t" style="left:661.9px;top:541px;font-size:30.20px;letter-spacing:0.808px;color:#181d27;-webkit-text-stroke:0.45px #181d27;">40</span>
<svg style="left:659.0px;top:583.0px;" width="28" height="24" viewBox="0 0 28 24" fill="none">
<path d="M1.6 4.6L3.6 6.6L7 3M1.6 11.6L3.6 13.6L7 10M1.6 18.6L3.6 20.6L7 17" stroke="#1570ef" stroke-width="1.7" stroke-linecap="round" stroke-linejoin="round" fill="none"/>
<path d="M11.4 4.8H25.6M11.4 11.8H25.6M11.4 18.8H25.6" stroke="#a9c8f9" stroke-width="1.7" stroke-linecap="round"/>
</svg>
<span class="t" style="left:700.0px;top:586px;font-size:23.21px;letter-spacing:0.077px;color:#757575;">Total Tests</span>
<span class="t" style="left:1234.9px;top:541px;font-size:30.20px;letter-spacing:0.108px;color:#181d27;-webkit-text-stroke:0.45px #181d27;">22</span>
<svg style="left:1231.6px;top:580.4px;" width="29" height="29" viewBox="0 0 29 29" fill="none">
<circle cx="14.6" cy="14.6" r="11.8" stroke="#48c9a0" stroke-width="1.5" fill="none"/>
<path d="M8.6 14.2L13 18.6L20.6 10.6" stroke="#48c9a0" stroke-width="1.5" stroke-linecap="round" stroke-linejoin="round" fill="none"/>
</svg>
<span class="t" style="left:1272.0px;top:586px;font-size:23.21px;letter-spacing:-0.120px;color:#757575;">Success</span>
<svg style="left:1621.0px;top:521.4px;" width="112" height="112" viewBox="0 0 112 112" fill="none">
<circle cx="56" cy="56" r="47.4" stroke="#edf1f0" stroke-width="6.5"/>
<circle cx="56" cy="56" r="47.4" stroke="#48c9a0" stroke-width="6.5" stroke-linecap="round" stroke-dasharray="161.72 297.82" transform="rotate(-90 56 56)"/>
</svg>
<span class="t" style="left:1650.0px;top:564px;font-size:25.32px;letter-spacing:1.561px;color:#48c9a0;-webkit-text-stroke:0.3px #48c9a0;">55%</span>
<span class="t" style="left:1808.0px;top:541px;font-size:30.20px;color:#181d27;-webkit-text-stroke:0.45px #181d27;">1</span>
<svg style="left:1804.0px;top:581.2px;" width="29" height="29" viewBox="0 0 29 29" fill="none">
<circle cx="14.6" cy="14.6" r="11.1" stroke="#fdb44a" stroke-width="1.3" fill="none"/>
<path d="M6.9 6.9L22.3 22.3" stroke="#fdb44a" stroke-width="1.3" stroke-linecap="round"/>
</svg>
<span class="t" style="left:1845.0px;top:586px;font-size:23.21px;letter-spacing:0.118px;color:#757575;">Aborted</span>
<svg style="left:2193.5px;top:521.4px;" width="112" height="112" viewBox="0 0 112 112" fill="none">
<circle cx="56" cy="56" r="47.4" stroke="#f5f4f1" stroke-width="6.5"/>
<circle cx="56" cy="56" r="47.4" stroke="#fab005" stroke-width="6.5" stroke-linecap="round" stroke-dasharray="3.57 297.82" transform="rotate(-90 56 56)"/>
</svg>
<span class="t" style="left:2219.8px;top:564px;font-size:25.32px;letter-spacing:0.829px;color:#fbb31a;-webkit-text-stroke:0.3px #fbb31a;">2.5%</span>
<span class="t" style="left:2380.5px;top:541px;font-size:30.20px;letter-spacing:-0.192px;color:#181d27;-webkit-text-stroke:0.45px #181d27;">17</span>
<svg style="left:2377.3px;top:580.6px;" width="29" height="29" viewBox="0 0 29 29" fill="none">
<circle cx="14.6" cy="14.6" r="11.1" stroke="#f9826a" stroke-width="1.2" fill="none"/>
<path d="M10.2 10.2L19 19M19 10.2L10.2 19" stroke="#f9826a" stroke-width="1.3" stroke-linecap="round"/>
</svg>
<span class="t" style="left:2417.4px;top:586px;font-size:23.21px;color:#757575;transform:scaleX(0.9586);transform-origin:0 50%;">Failed</span>
<svg style="left:2765.9px;top:521.4px;" width="112" height="112" viewBox="0 0 112 112" fill="none">
<circle cx="56" cy="56" r="47.4" stroke="#f6f1ef" stroke-width="6.5"/>
<circle cx="56" cy="56" r="47.4" stroke="#f0441f" stroke-width="6.5" stroke-linecap="round" stroke-dasharray="125.09 297.82" transform="rotate(-90 56 56)"/>
</svg>
<span class="t" style="left:2783.5px;top:564px;font-size:25.32px;letter-spacing:1.252px;color:#f0441f;-webkit-text-stroke:0.3px #f0441f;">42.5%</span></section>
<div class="card" style="left:634.3px;top:680.0px;width:2265.7px;height:75.0px;border-radius:18px"></div>
<span class="t" style="left:667.7px;top:708px;font-size:22.44px;letter-spacing:-0.060px;font-weight:700;color:#1570ef;">Test Cases</span>
<div style="left:797.7px;top:704.0px;width:39.0px;height:27.6px;background:#1570ef;border-radius:5px"></div>
<span class="t" style="left:805.6px;top:709px;font-size:20.40px;letter-spacing:0.609px;font-weight:700;color:#fff;">57</span>
<div style="left:667.0px;top:742.0px;width:176.0px;height:3.0px;background:#1570ef"></div>
<span class="t" style="left:882.0px;top:707px;font-size:23.21px;letter-spacing:-0.324px;color:#414651;">Pipelines</span>
<div class="badge" style="left:988.0px;top:704.0px;width:25.6px;height:27.6px;"></div>
<span class="t" style="left:995.5px;top:710px;font-size:18.99px;color:#414651;">6</span>
<span class="t" style="left:1438.7px;top:704px;font-size:17.30px;letter-spacing:0.102px;color:#101010;">custom3</span>
<section style="left:0;top:0;width:2943px;height:1424px;clip-path:inset(773px 0 0 0)"><div style="left:634.2px;top:788.0px;width:1.5px;height:660.0px;background:#eef0f4"></div>
<div style="left:2782.8px;top:773.0px;width:1.5px;height:660.0px;background:#eef0f4"></div>
<div style="left:635.0px;top:891.9px;width:2148.5px;height:95.5px;background:#fafafa"></div>
<div style="left:635.0px;top:1369.4px;width:2148.5px;height:95.5px;background:#fafafa"></div>
<div class="hl" style="left:635.0px;top:795.6px;width:2148.5px;height:1.5px;"></div>
<div class="hl" style="left:635.0px;top:891.1px;width:2148.5px;height:1.5px;"></div>
<div class="hl" style="left:635.0px;top:986.6px;width:2148.5px;height:1.5px;"></div>
<div class="hl" style="left:635.0px;top:1082.2px;width:2148.5px;height:1.5px;"></div>
<div class="hl" style="left:635.0px;top:1177.7px;width:2148.5px;height:1.5px;"></div>
<div class="hl" style="left:635.0px;top:1273.2px;width:2148.5px;height:1.5px;"></div>
<div class="hl" style="left:635.0px;top:1368.7px;width:2148.5px;height:1.5px;"></div>
<span class="t" style="left:1914.2px;top:751px;font-size:23.21px;letter-spacing:0.310px;color:#2b303b;">(UTC+05:30)</span>
<div class="sq" style="left:660.7px;top:813.8px;width:25.0px;height:25.0px;background:#f04424"></div>
<span class="t" style="left:699.5px;top:816px;font-size:23.21px;letter-spacing:0.150px;color:#175cd3;">Test cases</span>
<span class="t" style="left:1477.5px;top:816px;font-size:23.21px;letter-spacing:0.697px;color:#414651;">- -</span>
<span class="t" style="left:1914.2px;top:816px;font-size:23.21px;letter-spacing:0.311px;color:#2b303b;">May 16, 2025, 4:20 PM</span>
<span class="t" style="left:1914.2px;top:850px;font-size:23.21px;letter-spacing:0.310px;color:#2b303b;">(UTC+05:30)</span>
<div class="pill" style="left:2291.2px;top:809.7px;width:62.1px;height:33.8px;background:#efebfd;border-color:#8e72f6"></div><span class="t" style="left:2305.4px;top:819px;font-size:16.56px;letter-spacing:-0.068px;color:#6a42f0;-webkit-text-stroke:0.55px #6a42f0;">New</span>
<svg style="left:2552.3px;top:821.0px;" width="36" height="36" viewBox="0 0 31 31" fill="none"><path d="M7.6 22.7L8.3 17.5L15.4 7.6Q16.5 6.2 17.9 7.2L19.8 8.6Q21.1 9.7 20.1 11.1L12.6 20.6Z" stroke="#414651" stroke-width="1.55" stroke-linejoin="round" fill="none"/><path d="M14.3 9.3L18.8 12.6" stroke="#414651" stroke-width="1.3"/><path d="M15.8 22.9H22.4" stroke="#414651" stroke-width="1.6" stroke-linecap="round"/></svg>
<svg style="left:2613.4px;top:823.4px;" width="28" height="28" viewBox="0 0 28 28" fill="none"><path d="M4.6 7.6H23.4" stroke="#414651" stroke-width="2" stroke-linecap="round"/>
<path d="M10 7.2V5.4Q10 3.8 11.6 3.8H16.4Q18 3.8 18 5.4V7.2" stroke="#414651" stroke-width="1.7" fill="none"/>
<path d="M6.4 8L7.6 23.6Q7.8 25.6 9.8 25.6H18.2Q20.2 25.6 20.4 23.6L21.6 8" stroke="#414651" stroke-width="1.8" fill="none" stroke-linejoin="round"/>
<path d="M10.6 11.4L11 22M14 11.4V22M17.4 11.4L17 22" stroke="#414651" stroke-width="1.5" stroke-linecap="round"/></svg>
<div class="sq" style="left:660.7px;top:909.3px;width:25.0px;height:25.0px;background:#f04424"></div>
<span class="t" style="left:699.5px;top:912px;font-size:23.21px;letter-spacing:0.204px;color:#175cd3;">ColumnTest12</span>
<span class="t" style="left:1475.5px;top:912px;font-size:23.21px;letter-spacing:-0.095px;color:#2b303b;">first_name</span>
<span class="t" style="left:1914.2px;top:912px;font-size:23.21px;letter-spacing:0.260px;color:#2b303b;">February 26, 2025, 8:37 PM</span>
<span class="t" style="left:1914.2px;top:946px;font-size:23.21px;letter-spacing:0.310px;color:#2b303b;">(UTC+05:30)</span>
<div class="pill" style="left:2291.2px;top:905.2px;width:97.6px;height:33.8px;background:#dbf2ea;border-color:#4fcaa2"></div><span class="t" style="left:2305.4px;top:914px;font-size:16.56px;letter-spacing:-0.050px;color:#3fc096;-webkit-text-stroke:0.55px #3fc096;">Resolved</span>
<svg style="left:2552.3px;top:916.5px;" width="36" height="36" viewBox="0 0 31 31" fill="none"><path d="M7.6 22.7L8.3 17.5L15.4 7.6Q16.5 6.2 17.9 7.2L19.8 8.6Q21.1 9.7 20.1 11.1L12.6 20.6Z" stroke="#414651" stroke-width="1.55" stroke-linejoin="round" fill="none"/><path d="M14.3 9.3L18.8 12.6" stroke="#414651" stroke-width="1.3"/><path d="M15.8 22.9H22.4" stroke="#414651" stroke-width="1.6" stroke-linecap="round"/></svg>
<svg style="left:2613.4px;top:918.9px;" width="28" height="28" viewBox="0 0 28 28" fill="none"><path d="M4.6 7.6H23.4" stroke="#414651" stroke-width="2" stroke-linecap="round"/>
<path d="M10 7.2V5.4Q10 3.8 11.6 3.8H16.4Q18 3.8 18 5.4V7.2" stroke="#414651" stroke-width="1.7" fill="none"/>
<path d="M6.4 8L7.6 23.6Q7.8 25.6 9.8 25.6H18.2Q20.2 25.6 20.4 23.6L21.6 8" stroke="#414651" stroke-width="1.8" fill="none" stroke-linejoin="round"/>
<path d="M10.6 11.4L11 22M14 11.4V22M17.4 11.4L17 22" stroke="#414651" stroke-width="1.5" stroke-linecap="round"/></svg>
<div class="sq" style="left:660.7px;top:1004.8px;width:25.0px;height:25.0px;background:#f04424"></div>
<span class="t" style="left:699.5px;top:1007px;font-size:23.21px;letter-spacing:-0.250px;color:#175cd3;">RedshiftProd_Manual_No_Of_Orders</span>
<span class="t" style="left:1475.5px;top:1007px;font-size:23.21px;letter-spacing:-0.177px;color:#2b303b;">number_of_orders</span>
<span class="t" style="left:1914.2px;top:1007px;font-size:23.21px;letter-spacing:0.359px;color:#2b303b;">February 19, 2025, 5:39 AM</span>
<span class="t" style="left:1914.2px;top:1041px;font-size:23.21px;letter-spacing:0.310px;color:#2b303b;">(UTC+05:30)</span>
<div class="pill" style="left:2291.2px;top:1000.7px;width:57.0px;height:33.8px;background:#e6f2ff;border-color:#74bafa"></div><span class="t" style="left:2305.4px;top:1010px;font-size:16.56px;letter-spacing:-0.306px;color:#2e82ee;-webkit-text-stroke:0.55px #2e82ee;">Ack</span>
<svg style="left:2552.3px;top:1012.0px;" width="36" height="36" viewBox="0 0 31 31" fill="none"><path d="M7.6 22.7L8.3 17.5L15.4 7.6Q16.5 6.2 17.9 7.2L19.8 8.6Q21.1 9.7 20.1 11.1L12.6 20.6Z" stroke="#414651" stroke-width="1.55" stroke-linejoin="round" fill="none"/><path d="M14.3 9.3L18.8 12.6" stroke="#414651" stroke-width="1.3"/><path d="M15.8 22.9H22.4" stroke="#414651" stroke-width="1.6" stroke-linecap="round"/></svg>
<svg style="left:2613.4px;top:1014.4px;" width="28" height="28" viewBox="0 0 28 28" fill="none"><path d="M4.6 7.6H23.4" stroke="#414651" stroke-width="2" stroke-linecap="round"/>
<path d="M10 7.2V5.4Q10 3.8 11.6 3.8H16.4Q18 3.8 18 5.4V7.2" stroke="#414651" stroke-width="1.7" fill="none"/>
<path d="M6.4 8L7.6 23.6Q7.8 25.6 9.8 25.6H18.2Q20.2 25.6 20.4 23.6L21.6 8" stroke="#414651" stroke-width="1.8" fill="none" stroke-linejoin="round"/>
<path d="M10.6 11.4L11 22M14 11.4V22M17.4 11.4L17 22" stroke="#414651" stroke-width="1.5" stroke-linecap="round"/></svg>
<div class="sq" style="left:660.7px;top:1100.3px;width:25.0px;height:25.0px;background:#f04424"></div>
<span class="t" style="left:699.5px;top:1103px;font-size:23.21px;letter-spacing:0.087px;color:#175cd3;">Null_check2</span>
<span class="t" style="left:1475.5px;top:1103px;font-size:23.21px;letter-spacing:-0.135px;color:#2b303b;">customer_lifetime_value</span>
<span class="t" style="left:1914.2px;top:1103px;font-size:23.21px;letter-spacing:0.359px;color:#2b303b;">February 19, 2025, 5:39 AM</span>
<span class="t" style="left:1914.2px;top:1137px;font-size:23.21px;letter-spacing:0.310px;color:#2b303b;">(UTC+05:30)</span>
<div class="pill" style="left:2291.2px;top:1096.2px;width:97.6px;height:33.8px;background:#dbf2ea;border-color:#4fcaa2"></div><span class="t" style="left:2305.4px;top:1105px;font-size:16.56px;letter-spacing:-0.050px;color:#3fc096;-webkit-text-stroke:0.55px #3fc096;">Resolved</span>
<svg style="left:2552.3px;top:1107.5px;" width="36" height="36" viewBox="0 0 31 31" fill="none"><path d="M7.6 22.7L8.3 17.5L15.4 7.6Q16.5 6.2 17.9 7.2L19.8 8.6Q21.1 9.7 20.1 11.1L12.6 20.6Z" stroke="#414651" stroke-width="1.55" stroke-linejoin="round" fill="none"/><path d="M14.3 9.3L18.8 12.6" stroke="#414651" stroke-width="1.3"/><path d="M15.8 22.9H22.4" stroke="#414651" stroke-width="1.6" stroke-linecap="round"/></svg>
<svg style="left:2613.4px;top:1109.9px;" width="28" height="28" viewBox="0 0 28 28" fill="none"><path d="M4.6 7.6H23.4" stroke="#414651" stroke-width="2" stroke-linecap="round"/>
<path d="M10 7.2V5.4Q10 3.8 11.6 3.8H16.4Q18 3.8 18 5.4V7.2" stroke="#414651" stroke-width="1.7" fill="none"/>
<path d="M6.4 8L7.6 23.6Q7.8 25.6 9.8 25.6H18.2Q20.2 25.6 20.4 23.6L21.6 8" stroke="#414651" stroke-width="1.8" fill="none" stroke-linejoin="round"/>
<path d="M10.6 11.4L11 22M14 11.4V22M17.4 11.4L17 22" stroke="#414651" stroke-width="1.5" stroke-linecap="round"/></svg>
<div class="sq" style="left:660.7px;top:1213.6px;width:25.0px;height:25.0px;background:#f04424"></div>
<span class="t" style="left:699.5px;top:1198px;font-size:23.21px;letter-spacing:-0.115px;color:#175cd3;">most_recent_order_column_values_to_be</span>
<span class="t" style="left:699.5px;top:1232px;font-size:23.21px;letter-spacing:-0.333px;color:#175cd3;">_not_null_T9ap</span>
<span class="t" style="left:1475.5px;top:1198px;font-size:23.21px;letter-spacing:-0.094px;color:#2b303b;">most_recent_order</span>
<span class="t" style="left:1914.2px;top:1198px;font-size:23.21px;letter-spacing:0.359px;color:#2b303b;">February 19, 2025, 5:39 AM</span>
<span class="t" style="left:1914.2px;top:1232px;font-size:23.21px;letter-spacing:0.310px;color:#2b303b;">(UTC+05:30)</span>
<div class="pill" style="left:2291.2px;top:1191.7px;width:97.6px;height:33.8px;background:#dbf2ea;border-color:#4fcaa2"></div><span class="t" style="left:2305.4px;top:1201px;font-size:16.56px;letter-spacing:-0.050px;color:#3fc096;-webkit-text-stroke:0.55px #3fc096;">Resolved</span>
<svg style="left:2552.3px;top:1203.0px;" width="36" height="36" viewBox="0 0 31 31" fill="none"><path d="M7.6 22.7L8.3 17.5L15.4 7.6Q16.5 6.2 17.9 7.2L19.8 8.6Q21.1 9.7 20.1 11.1L12.6 20.6Z" stroke="#414651" stroke-width="1.55" stroke-linejoin="round" fill="none"/><path d="M14.3 9.3L18.8 12.6" stroke="#414651" stroke-width="1.3"/><path d="M15.8 22.9H22.4" stroke="#414651" stroke-width="1.6" stroke-linecap="round"/></svg>
<svg style="left:2613.4px;top:1205.4px;" width="28" height="28" viewBox="0 0 28 28" fill="none"><path d="M4.6 7.6H23.4" stroke="#414651" stroke-width="2" stroke-linecap="round"/>
<path d="M10 7.2V5.4Q10 3.8 11.6 3.8H16.4Q18 3.8 18 5.4V7.2" stroke="#414651" stroke-width="1.7" fill="none"/>
<path d="M6.4 8L7.6 23.6Q7.8 25.6 9.8 25.6H18.2Q20.2 25.6 20.4 23.6L21.6 8" stroke="#414651" stroke-width="1.8" fill="none" stroke-linejoin="round"/>
<path d="M10.6 11.4L11 22M14 11.4V22M17.4 11.4L17 22" stroke="#414651" stroke-width="1.5" stroke-linecap="round"/></svg>
<div class="sq" style="left:660.7px;top:1291.3px;width:25.0px;height:25.0px;background:#48c9a0"></div>
<span class="t" style="left:699.5px;top:1294px;font-size:23.21px;letter-spacing:0.152px;color:#175cd3;">Validate order dates</span>
<span class="t" style="left:1477.5px;top:1294px;font-size:23.21px;letter-spacing:0.697px;color:#414651;">- -</span>
<span class="t" style="left:1914.2px;top:1294px;font-size:23.21px;letter-spacing:0.435px;color:#2b303b;">May 26, 2025, 5:42 AM</span>
<span class="t" style="left:1914.2px;top:1328px;font-size:23.21px;letter-spacing:0.310px;color:#2b303b;">(UTC+05:30)</span>
<span class="t" style="left:2293.8px;top:1294px;font-size:23.21px;letter-spacing:0.697px;color:#414651;">- -</span>
<svg style="left:2552.3px;top:1298.5px;" width="36" height="36" viewBox="0 0 31 31" fill="none"><path d="M7.6 22.7L8.3 17.5L15.4 7.6Q16.5 6.2 17.9 7.2L19.8 8.6Q21.1 9.7 20.1 11.1L12.6 20.6Z" stroke="#414651" stroke-width="1.55" stroke-linejoin="round" fill="none"/><path d="M14.3 9.3L18.8 12.6" stroke="#414651" stroke-width="1.3"/><path d="M15.8 22.9H22.4" stroke="#414651" stroke-width="1.6" stroke-linecap="round"/></svg>
<svg style="left:2613.4px;top:1300.9px;" width="28" height="28" viewBox="0 0 28 28" fill="none"><path d="M4.6 7.6H23.4" stroke="#414651" stroke-width="2" stroke-linecap="round"/>
<path d="M10 7.2V5.4Q10 3.8 11.6 3.8H16.4Q18 3.8 18 5.4V7.2" stroke="#414651" stroke-width="1.7" fill="none"/>
<path d="M6.4 8L7.6 23.6Q7.8 25.6 9.8 25.6H18.2Q20.2 25.6 20.4 23.6L21.6 8" stroke="#414651" stroke-width="1.8" fill="none" stroke-linejoin="round"/>
<path d="M10.6 11.4L11 22M14 11.4V22M17.4 11.4L17 22" stroke="#414651" stroke-width="1.5" stroke-linecap="round"/></svg>
<div class="sq" style="left:660.7px;top:1404.6px;width:25.0px;height:25.0px;background:#48c9a0"></div>
<span class="t" style="left:699.5px;top:1389px;font-size:23.21px;letter-spacing:-0.189px;color:#175cd3;">number_of_orders_column_values_to_be_</span>
<span class="t" style="left:1475.5px;top:1389px;font-size:23.21px;letter-spacing:-0.177px;color:#2b303b;">number_of_orders</span>
<span class="t" style="left:1914.2px;top:1389px;font-size:23.21px;letter-spacing:0.435px;color:#2b303b;">May 26, 2025, 5:42 AM</span>
<span class="t" style="left:1914.2px;top:1423px;font-size:23.21px;letter-spacing:0.310px;color:#2b303b;">(UTC+05:30)</span>
<span class="t" style="left:2293.8px;top:1389px;font-size:23.21px;letter-spacing:0.697px;color:#414651;">- -</span>
<svg style="left:2552.3px;top:1394.0px;" width="36" height="36" viewBox="0 0 31 31" fill="none"><path d="M7.6 22.7L8.3 17.5L15.4 7.6Q16.5 6.2 17.9 7.2L19.8 8.6Q21.1 9.7 20.1 11.1L12.6 20.6Z" stroke="#414651" stroke-width="1.55" stroke-linejoin="round" fill="none"/><path d="M14.3 9.3L18.8 12.6" stroke="#414651" stroke-width="1.3"/><path d="M15.8 22.9H22.4" stroke="#414651" stroke-width="1.6" stroke-linecap="round"/></svg>
<svg style="left:2613.4px;top:1396.4px;" width="28" height="28" viewBox="0 0 28 28" fill="none"><path d="M4.6 7.6H23.4" stroke="#414651" stroke-width="2" stroke-linecap="round"/>
<path d="M10 7.2V5.4Q10 3.8 11.6 3.8H16.4Q18 3.8 18 5.4V7.2" stroke="#414651" stroke-width="1.7" fill="none"/>
<path d="M6.4 8L7.6 23.6Q7.8 25.6 9.8 25.6H18.2Q20.2 25.6 20.4 23.6L21.6 8" stroke="#414651" stroke-width="1.8" fill="none" stroke-linejoin="round"/>
<path d="M10.6 11.4L11 22M14 11.4V22M17.4 11.4L17 22" stroke="#414651" stroke-width="1.5" stroke-linecap="round"/></svg>
<div style="left:2227.0px;top:965.9px;width:352.0px;height:54.6px;background:rgba(0,0,0,.73);border-radius:9px;box-shadow:0 4px 12px rgba(0,0,0,.14)"></div>
<svg style="left:2388.0px;top:960.5px;" width="30" height="5.4" viewBox="0 0 30 5.4" fill="none"><path d="M0 5.4C8 5.4 9 0.4 15 0.4C21 0.4 22 5.4 30 5.4Z" fill="#000" fill-opacity=".73"/></svg>
<span class="t" style="left:2240.4px;top:982px;font-size:23.21px;letter-spacing:0.105px;color:#fff;">Feb 27, 2025 by Prajwal Pandit</span></section>
<div style="left:2884.6px;top:1080.6px;width:15.4px;height:400.0px;background:#c8d7e2;border-radius:8px"></div>
<div style="left:2925.8px;top:583.0px;width:12.2px;height:900.0px;background:#c5d4df;border-radius:8px 8px 0 0"></div>
<div style="left:2854.2px;top:1306.2px;width:77.4px;height:77.4px;background:#0950c5;border-radius:50%;border:3.6px solid #fff;box-shadow:0 0 7px 1.5px rgba(21,112,239,.5)"></div>
<svg style="left:2866.0px;top:1318.0px;" width="54" height="54" viewBox="0 0 54 54" fill="none">
<path d="M27 9V15" stroke="#cfe2ff" stroke-width="2.4"/>
<circle cx="27" cy="8" r="2.6" fill="#cfe2ff"/>
<path d="M7.4 26H10V34H7.4Q5.6 34 5.6 32V28Q5.6 26 7.4 26ZM46.6 26H44V34H46.6Q48.4 34 48.4 32V28Q48.4 26 46.6 26Z" fill="#cfe2ff"/>
<path d="M17 16H37Q45 16 45 24V34Q45 42 37 42H32L28 46.4V42H17Q9 42 9 34V24Q9 16 17 16Z" fill="#fff"/>
<rect x="12.6" y="22.4" width="28.8" height="14" rx="5.4" fill="#c4defe"/>
<circle cx="21.6" cy="29.6" r="2.1" fill="#0950c5"/><circle cx="32.4" cy="29.6" r="2.1" fill="#0950c5"/>
</svg>
<div style="left:0.0px;top:1330.0px;width:2943.0px;height:94.0px;background:linear-gradient(to bottom,rgba(0,0,0,0) 0%,rgba(0,0,0,.015) 45%,rgba(0,0,0,.05) 80%,rgba(0,0,0,.12) 100%)"></div>
</main>
<div style="left:2938.0px;top:0.0px;width:5.0px;height:1424.0px;background:#fff"></div>
</div>
</body>
</html>
